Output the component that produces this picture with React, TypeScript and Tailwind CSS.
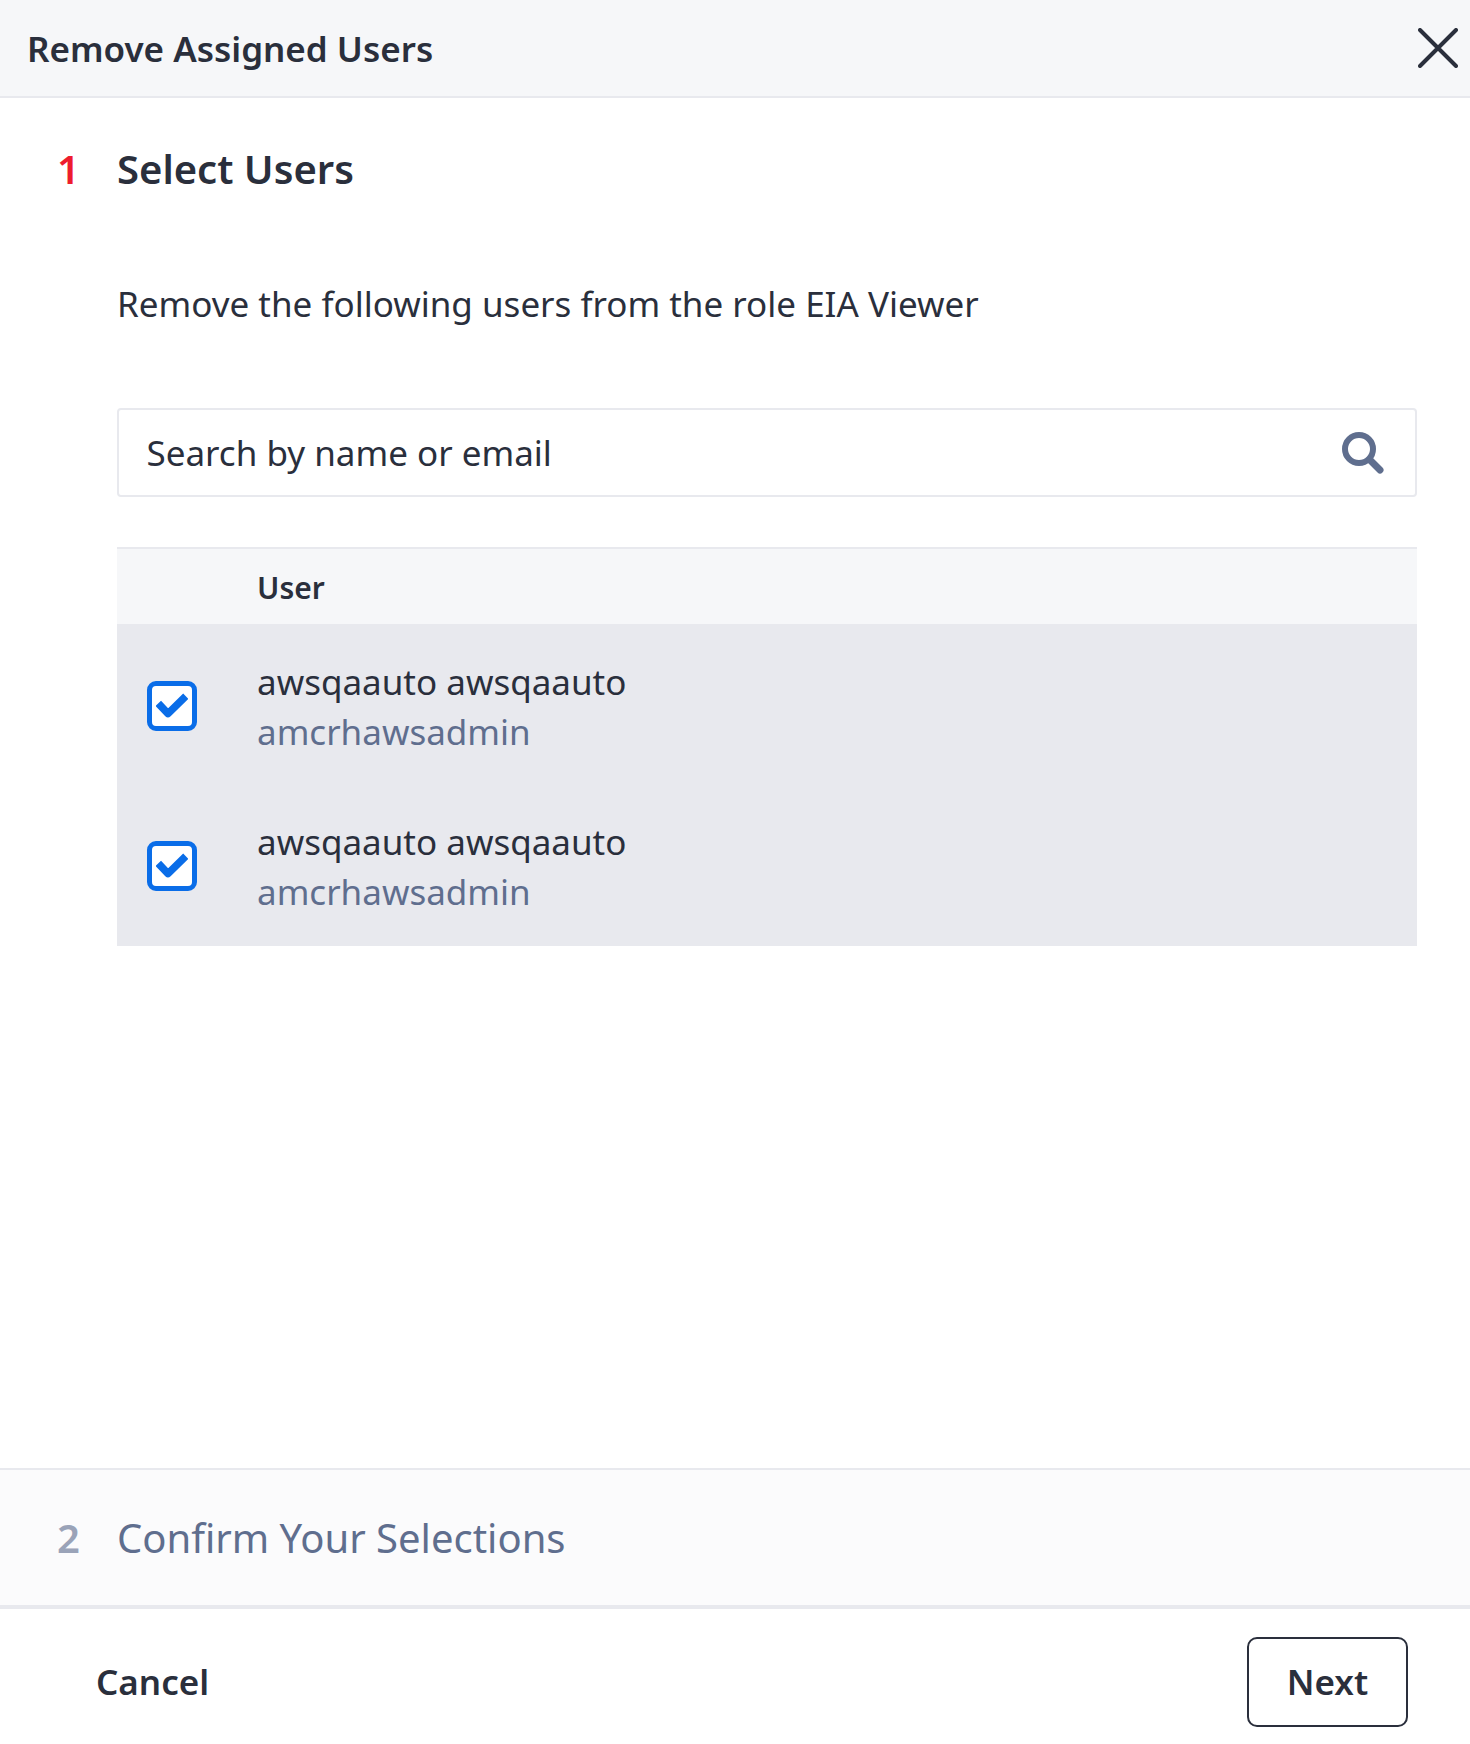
const usuarios = [
  { nome: "awsqaauto awsqaauto", login: "amcrhawsadmin" },
  { nome: "awsqaauto awsqaauto", login: "amcrhawsadmin" },
]

function Caixa() {
  return (
    <span className="flex h-[50px] w-[50px] items-center justify-center rounded-[9px] border-[5px] border-[#0a6de8] bg-white">
      <svg viewBox="0 0 32 26" className="h-[26px] w-[32px] shrink-0" fill="none" stroke="#0a6de8" strokeWidth="7.5" strokeLinejoin="round" strokeLinecap="butt">
        <path d="M2.3 10.4L12 20.6L29.8 3.2" />
      </svg>
    </span>
  )
}

export default function App() {
  return (
    <div className="flex h-[1744px] w-[1470px] flex-col bg-white font-['Noto_Sans',sans-serif] text-[#2a2f3c]">
      <header className="flex h-[98px] items-center justify-between border-b-2 border-[#e8e9ee] bg-[#f6f7f9] pl-[27px] pr-[12px]">
        <h1 className="pt-[2px] text-[35px] font-semibold">Remove Assigned Users</h1>
        <svg viewBox="0 0 40 40" className="h-[40px] w-[40px]" fill="none" stroke="#2a2f3c" strokeWidth="4" strokeLinecap="round">
          <path d="M2 2l36 36M38 2L2 38" />
        </svg>
      </header>

      <section className="flex-1 pl-[57px] pr-[53px]">
        <div className="flex h-[142px] items-center">
          <span className="w-[60px] text-[40px] font-semibold text-[#ee1c2e]">1</span>
          <h2 className="text-[40px] font-semibold">Select Users</h2>
        </div>
        <div className="pl-[60px]">
          <p className="mt-[41px] text-[35px] leading-[46px]">Remove the following users from the role EIA Viewer</p>
          <div className="mt-[81px] flex h-[89px] items-center justify-between rounded-[4px] border-2 border-[#e8e9ee] pl-[27.5px] pr-[31px]">
            <span className="pt-[2px] text-[35px]">Search by name or email</span>
            <svg viewBox="0 0 42 42" className="h-[42px] w-[42px]" fill="none" stroke="#5f6e8e" strokeWidth="6">
              <circle cx="17" cy="17" r="14" />
              <path d="M28 28l10 10" strokeLinecap="round" strokeWidth="7" />
            </svg>
          </div>
          <div className="mt-[50px] flex h-[77px] items-center border-t-2 border-[#e8e9ee] bg-[#f6f7f9] pl-[140px]">
            <span className="pt-[2px] text-[30px] font-semibold">User</span>
          </div>
          <ul className="bg-[#e8e9ee] pt-[2px]">
            {usuarios.map((u, i) => (
              <li key={i} className="flex h-[160px] items-center pl-[30px]">
                <Caixa />
                <div className="pl-[60px] pt-[2px]">
                  <p className="text-[35px] leading-[50px]">{u.nome}</p>
                  <p className="text-[35px] leading-[50px] text-[#5f6e8e]">{u.login}</p>
                </div>
              </li>
            ))}
          </ul>
        </div>
      </section>

      <div className="flex h-[141px] items-center border-t-2 border-b-4 border-[#e8e9ee] bg-[#fbfbfc] pl-[57px]">
        <span className="w-[60px] text-[40px] font-semibold text-[#9aa3b8]">2</span>
        <span className="text-[40px] text-[#5f6e8e]">Confirm Your Selections</span>
      </div>

      <footer className="flex h-[135px] items-end justify-between pb-[17px] pl-[96px] pr-[62px]">
        <button className="h-[90px] text-[35px] font-semibold">Cancel</button>
        <button className="h-[90px] w-[161px] rounded-[10px] border-2 border-[#2a2f3c] text-[35px] font-semibold">Next</button>
      </footer>
    </div>
  )
}
